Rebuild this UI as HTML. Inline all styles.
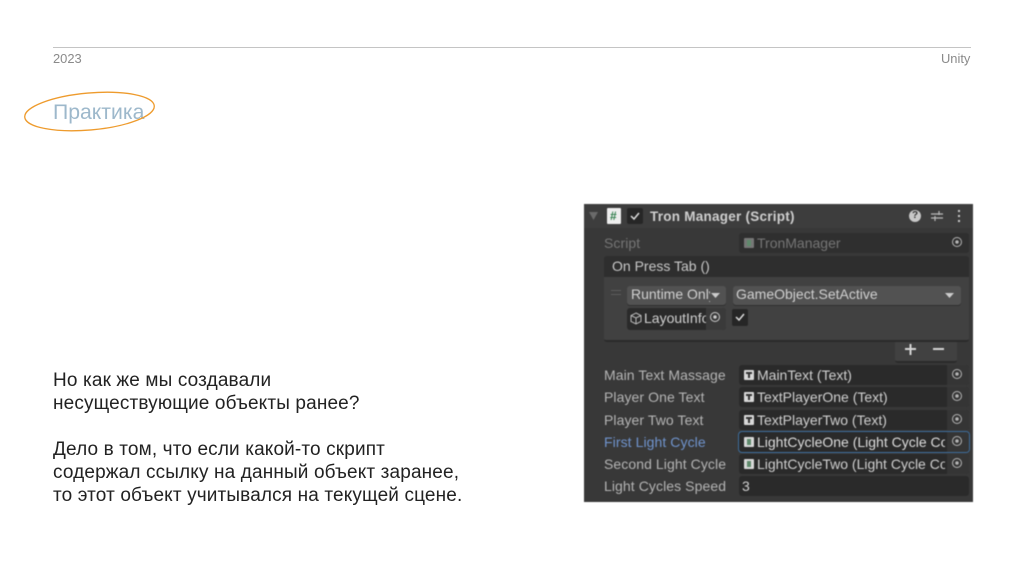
<!DOCTYPE html>
<html><head><meta charset="utf-8">
<style>
html,body{margin:0;padding:0;background:#fff}
#s{position:relative;width:1024px;height:574px;overflow:hidden;background:#fff;font-family:"Liberation Sans",sans-serif}
.a{position:absolute;white-space:nowrap}
#p{position:absolute;left:584px;top:204px;width:389px;height:298px;background:#383838;overflow:hidden;filter:blur(.45px);font-size:14px;color:#c4c4c4}
#p .a{line-height:18px}
.l{left:20px;color:#b4b4b4;letter-spacing:.08px}
.f{left:155px;width:230px;height:20px;background:#2a2a2a;border-radius:3px}
.f span{position:absolute;left:18px;top:1px;line-height:18px;color:#cfcfcf;white-space:nowrap;width:188px;overflow:hidden}
.f i{position:absolute;right:0;top:0;width:22px;height:20px;background:#353535;border-radius:0 3px 3px 0}
.f i:after{content:"";position:absolute;left:5px;top:4px;width:8px;height:8px;border:1.5px solid #b5b5b5;border-radius:50%;background:radial-gradient(circle,#b5b5b5 0 1.5px,transparent 2px)}
.f b{position:absolute;left:5px;top:5px;width:10px;height:10px;background:#d8d8d8;border-radius:1px}
.f b:after{content:"";position:absolute;left:2px;top:2px;width:6px;height:2px;background:#333}
.f b:before{content:"";position:absolute;left:4px;top:2px;width:2px;height:6px;background:#333}
.f b.c:after{left:3px;top:2px;width:4px;height:6px;background:#5f8a6c}
.f b.c:before{display:none}
</style></head><body>
<div id="s">
<div class="a" style="left:53px;top:47px;width:918px;height:1px;background:#c4c4c4"></div>
<div class="a" style="left:53px;top:51px;font-size:12.900px;line-height:16px;color:#8a8a8a">2023</div>
<div class="a" style="left:941px;top:51px;font-size:12.900px;line-height:16px;color:#8a8a8a">Unity</div>
<div class="a" style="left:53px;top:101px;font-size:21.200px;line-height:24px;color:#9db8cb">Практика</div>
<svg class="a" style="left:20px;top:86px" width="140" height="52" viewBox="0 0 140 52"><ellipse cx="69.500" cy="25.500" rx="65" ry="18.500" transform="rotate(-5 69.500 25.500)" fill="none" stroke="#ee9b2d" stroke-width="1.300"/></svg>
<div class="a" style="left:53px;top:369px;font-size:19px;letter-spacing:.14px;line-height:23px;color:#222">Но как же мы создавали<br>несуществующие объекты ранее?<br><br>Дело в том, что если какой-то скрипт<br>содержал ссылку на данный объект заранее,<br>то этот объект учитывался на текущей сцене.</div>

<div id="p">
<div class="a" style="left:0;top:0;width:389px;height:24px;background:#3d3d3d"></div>
<svg class="a" style="left:5px;top:8px" width="10" height="9"><path d="M0 0H9L4.500 8Z" fill="#6a6a6a"/></svg>
<div class="a" style="left:23px;top:4px;width:14px;height:16px;background:#eee;border-radius:1px"></div>
<div class="a" style="left:26px;top:3px;font-size:12px;font-weight:bold;color:#2e7d4a">#</div>
<div class="a" style="left:43px;top:4px;width:16px;height:16px;background:#262626;border-radius:2px"></div>
<svg class="a" style="left:46px;top:8px" width="10" height="8"><path d="M1 4L4 7L9 1" fill="none" stroke="#ddd" stroke-width="1.500"/></svg>
<div class="a" style="left:66px;top:4px;font-weight:bold;font-size:13.500px;color:#cfcfcf;letter-spacing:.25px">Tron Manager (Script)</div>
<div class="a" style="left:325px;top:6px;width:12px;height:12px;border-radius:50%;background:#c8c8c8"></div>
<div class="a" style="left:325px;top:3px;width:12px;text-align:center;font-size:10px;font-weight:bold;color:#333">?</div>
<svg class="a" style="left:347px;top:6px" width="13" height="12"><path d="M0 4H12M0 8H12M8 1V5M4 6V11" stroke="#bbb" stroke-width="1.200" fill="none"/></svg>
<svg class="a" style="left:373px;top:5px" width="4" height="14"><path d="M2 1V3M2 6V8M2 11V13" stroke="#ccc" stroke-width="2" fill="none"/></svg>

<div class="a l" style="top:30px;color:#757575">Script</div>
<div class="a f" style="top:29px;background:#2f2f2f"><b class="c" style="background:#777"></b><span style="color:#757575;top:1px">TronManager</span><i style="background:#2f2f2f"></i></div>

<div class="a" style="left:20px;top:52px;width:365px;height:21px;background:#2e2e2e;border-radius:3px 3px 0 0"></div>
<div class="a" style="left:28px;top:53px;color:#c8c8c8">On Press Tab ()</div>
<div class="a" style="left:20px;top:73px;width:365px;height:63px;background:#414141;border-bottom:2px solid #2a2a2a;border-radius:0 0 3px 3px"></div>
<div class="a" style="left:27px;top:86px;width:10px;height:3px;border-top:1px solid #5c5c5c;border-bottom:1px solid #5c5c5c"></div>
<div class="a" style="left:43px;top:82px;width:99px;height:19px;background:#525252;border-radius:3px;box-shadow:0 1px 0 #303030"></div>
<div class="a" style="left:47px;top:81px;width:79px;overflow:hidden;color:#d0d0d0">Runtime Only</div>
<svg class="a" style="left:127px;top:89px" width="10" height="6"><path d="M0 0H9L4.500 5Z" fill="#ccc"/></svg>
<div class="a" style="left:149px;top:82px;width:228px;height:19px;background:#525252;border-radius:3px;box-shadow:0 1px 0 #303030"></div>
<div class="a" style="left:152px;top:81px;color:#d0d0d0">GameObject.SetActive</div>
<svg class="a" style="left:361px;top:89px" width="10" height="6"><path d="M0 0H9L4.500 5Z" fill="#ccc"/></svg>
<div class="a" style="left:43px;top:104px;width:99px;height:22px;background:#2a2a2a;border-radius:3px"></div>
<div class="a" style="left:122px;top:104px;width:20px;height:22px;background:#3a3a3a;border-radius:0 3px 3px 0"></div>
<svg class="a" style="left:46px;top:108px" width="12" height="13"><path d="M6 1L11 3.500V9.500L6 12L1 9.500V3.500ZM1 3.500L6 6L11 3.500M6 6V12" fill="none" stroke="#bbb"/></svg>
<div class="a" style="left:60px;top:105px;width:62px;overflow:hidden;color:#d0d0d0">LayoutInfo</div>
<div class="a" style="left:126px;top:108px;width:8px;height:8px;border:1.500px solid #ccc;border-radius:50%;background:radial-gradient(circle,#ccc 0 1.500px,transparent 2px)"></div>
<div class="a" style="left:148px;top:105px;width:16px;height:17px;background:#262626;border-radius:2px"></div>
<svg class="a" style="left:151px;top:109px" width="10" height="8"><path d="M1 4L4 7L9 1" fill="none" stroke="#ddd" stroke-width="1.500"/></svg>

<div class="a" style="left:311px;top:138px;width:62px;height:19px;background:#414141;border-bottom:2px solid #2a2a2a;border-radius:0 0 3px 3px"></div>
<svg class="a" style="left:320px;top:139px" width="44" height="13"><path d="M1 6H12M6.500 1V12M29 6H40" stroke="#d5d5d5" stroke-width="2" fill="none"/></svg>

<div class="a l" style="top:162px">Main Text Massage</div>
<div class="a f" style="top:161px"><b></b><span>MainText (Text)</span><i></i></div>
<div class="a l" style="top:184px">Player One Text</div>
<div class="a f" style="top:183px"><b></b><span>TextPlayerOne (Text)</span><i></i></div>
<div class="a l" style="top:207px">Player Two Text</div>
<div class="a f" style="top:205.500px"><b></b><span>TextPlayerTwo (Text)</span><i></i></div>
<div class="a l" style="top:229px;color:#6f93cc">First Light Cycle</div>
<div class="a f" style="top:228px;box-shadow:0 0 0 1px #3d6d9c"><b class="c"></b><span style="color:#dcdcdc">LightCycleOne (Light Cycle Controller)</span><i></i></div>
<div class="a l" style="top:251px">Second Light Cycle</div>
<div class="a f" style="top:250px"><b class="c"></b><span>LightCycleTwo (Light Cycle Controller)</span><i></i></div>
<div class="a l" style="top:273px">Light Cycles Speed</div>
<div class="a f" style="top:272px;height:20px"><span style="left:3px">3</span></div>
</div>
</div>
</body></html>
